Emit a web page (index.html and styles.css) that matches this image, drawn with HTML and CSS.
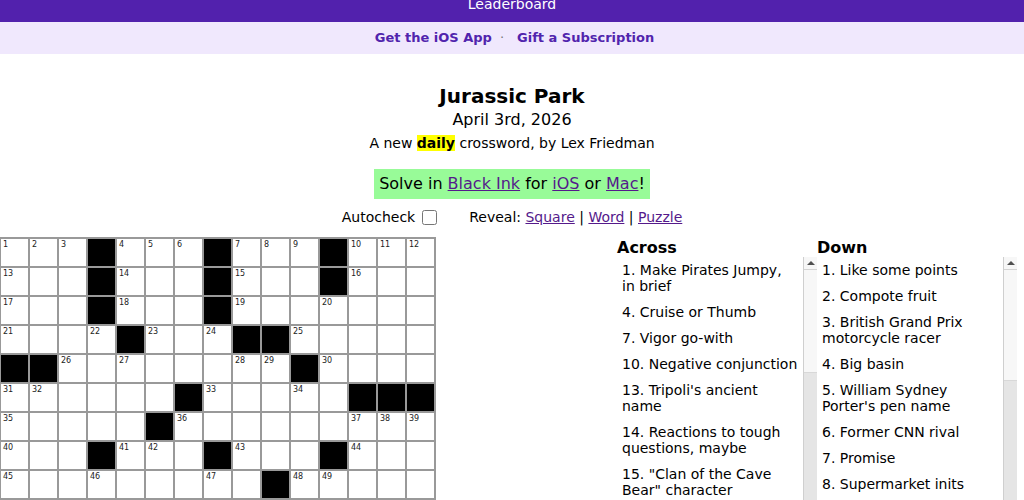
FILE: index.html
```html
<!DOCTYPE html>
<html lang="en">
<head>
<meta charset="utf-8">
<title>Jurassic Park</title>
<link rel="stylesheet" href="styles.css">
</head>
<body>
<header class="topbar"><a class="topbar-link" href="#">Leaderboard</a></header>
<nav class="subbar">
  <a class="sub-link" href="#">Get the iOS App</a><span class="sep">·</span><a class="sub-link" href="#">Gift a Subscription</a>
</nav>
<main class="page">
  <h1 class="title">Jurassic Park</h1>
  <div class="date">April 3rd, 2026</div>
  <div class="byline">A new <strong class="hl">daily</strong> crossword, by Lex Friedman</div>
  <div class="promo">Solve in <a href="#">Black Ink</a> for <a href="#">iOS</a> or <a href="#">Mac</a>!</div>
  <div class="controls">
    <label class="autocheck">Autocheck <input type="checkbox"></label>
    <span class="reveal">Reveal: <a href="#">Square</a> | <a href="#">Word</a> | <a href="#">Puzzle</a></span>
  </div>
  <section class="board">
    <div class="grid">
      <span class="sq"><span class="n">1</span></span><span class="sq"><span class="n">2</span></span><span class="sq"><span class="n">3</span></span><span class="sq blk"></span><span class="sq"><span class="n">4</span></span><span class="sq"><span class="n">5</span></span><span class="sq"><span class="n">6</span></span><span class="sq blk"></span><span class="sq"><span class="n">7</span></span><span class="sq"><span class="n">8</span></span><span class="sq"><span class="n">9</span></span><span class="sq blk"></span><span class="sq"><span class="n">10</span></span><span class="sq"><span class="n">11</span></span><span class="sq"><span class="n">12</span></span>
      <span class="sq"><span class="n">13</span></span><span class="sq"></span><span class="sq"></span><span class="sq blk"></span><span class="sq"><span class="n">14</span></span><span class="sq"></span><span class="sq"></span><span class="sq blk"></span><span class="sq"><span class="n">15</span></span><span class="sq"></span><span class="sq"></span><span class="sq blk"></span><span class="sq"><span class="n">16</span></span><span class="sq"></span><span class="sq"></span>
      <span class="sq"><span class="n">17</span></span><span class="sq"></span><span class="sq"></span><span class="sq blk"></span><span class="sq"><span class="n">18</span></span><span class="sq"></span><span class="sq"></span><span class="sq blk"></span><span class="sq"><span class="n">19</span></span><span class="sq"></span><span class="sq"></span><span class="sq"><span class="n">20</span></span><span class="sq"></span><span class="sq"></span><span class="sq"></span>
      <span class="sq"><span class="n">21</span></span><span class="sq"></span><span class="sq"></span><span class="sq"><span class="n">22</span></span><span class="sq blk"></span><span class="sq"><span class="n">23</span></span><span class="sq"></span><span class="sq"><span class="n">24</span></span><span class="sq blk"></span><span class="sq blk"></span><span class="sq"><span class="n">25</span></span><span class="sq"></span><span class="sq"></span><span class="sq"></span><span class="sq"></span>
      <span class="sq blk"></span><span class="sq blk"></span><span class="sq"><span class="n">26</span></span><span class="sq"></span><span class="sq"><span class="n">27</span></span><span class="sq"></span><span class="sq"></span><span class="sq"></span><span class="sq"><span class="n">28</span></span><span class="sq"><span class="n">29</span></span><span class="sq blk"></span><span class="sq"><span class="n">30</span></span><span class="sq"></span><span class="sq"></span><span class="sq"></span>
      <span class="sq"><span class="n">31</span></span><span class="sq"><span class="n">32</span></span><span class="sq"></span><span class="sq"></span><span class="sq"></span><span class="sq"></span><span class="sq blk"></span><span class="sq"><span class="n">33</span></span><span class="sq"></span><span class="sq"></span><span class="sq"><span class="n">34</span></span><span class="sq"></span><span class="sq blk"></span><span class="sq blk"></span><span class="sq blk"></span>
      <span class="sq"><span class="n">35</span></span><span class="sq"></span><span class="sq"></span><span class="sq"></span><span class="sq"></span><span class="sq blk"></span><span class="sq"><span class="n">36</span></span><span class="sq"></span><span class="sq"></span><span class="sq"></span><span class="sq"></span><span class="sq"></span><span class="sq"><span class="n">37</span></span><span class="sq"><span class="n">38</span></span><span class="sq"><span class="n">39</span></span>
      <span class="sq"><span class="n">40</span></span><span class="sq"></span><span class="sq"></span><span class="sq blk"></span><span class="sq"><span class="n">41</span></span><span class="sq"><span class="n">42</span></span><span class="sq"></span><span class="sq blk"></span><span class="sq"><span class="n">43</span></span><span class="sq"></span><span class="sq"></span><span class="sq blk"></span><span class="sq"><span class="n">44</span></span><span class="sq"></span><span class="sq"></span>
      <span class="sq"><span class="n">45</span></span><span class="sq"></span><span class="sq"></span><span class="sq"><span class="n">46</span></span><span class="sq"></span><span class="sq"></span><span class="sq"></span><span class="sq"><span class="n">47</span></span><span class="sq"></span><span class="sq blk"></span><span class="sq"><span class="n">48</span></span><span class="sq"><span class="n">49</span></span><span class="sq"></span><span class="sq"></span><span class="sq"></span>
      <span class="sq blk"></span><span class="sq blk"></span><span class="sq blk"></span><span class="sq"><span class="n">50</span></span><span class="sq"></span><span class="sq"></span><span class="sq"></span><span class="sq"></span><span class="sq blk"></span><span class="sq"><span class="n">51</span></span><span class="sq"></span><span class="sq"></span><span class="sq"></span><span class="sq"></span><span class="sq"></span>
      <span class="sq"><span class="n">52</span></span><span class="sq"><span class="n">53</span></span><span class="sq"><span class="n">54</span></span><span class="sq"></span><span class="sq blk"></span><span class="sq"><span class="n">55</span></span><span class="sq"></span><span class="sq"></span><span class="sq"><span class="n">56</span></span><span class="sq"></span><span class="sq"></span><span class="sq"></span><span class="sq"></span><span class="sq blk"></span><span class="sq blk"></span>
      <span class="sq"><span class="n">57</span></span><span class="sq"></span><span class="sq"></span><span class="sq"></span><span class="sq"><span class="n">58</span></span><span class="sq blk"></span><span class="sq blk"></span><span class="sq"><span class="n">59</span></span><span class="sq"></span><span class="sq"></span><span class="sq blk"></span><span class="sq"><span class="n">60</span></span><span class="sq"></span><span class="sq"><span class="n">61</span></span><span class="sq"><span class="n">62</span></span>
      <span class="sq"><span class="n">63</span></span><span class="sq"></span><span class="sq"></span><span class="sq"></span><span class="sq"></span><span class="sq"><span class="n">64</span></span><span class="sq"><span class="n">65</span></span><span class="sq blk"></span><span class="sq"><span class="n">66</span></span><span class="sq"></span><span class="sq"><span class="n">67</span></span><span class="sq blk"></span><span class="sq"><span class="n">68</span></span><span class="sq"></span><span class="sq"></span>
      <span class="sq"><span class="n">69</span></span><span class="sq"></span><span class="sq"></span><span class="sq blk"></span><span class="sq"><span class="n">70</span></span><span class="sq"></span><span class="sq"></span><span class="sq blk"></span><span class="sq"><span class="n">71</span></span><span class="sq"></span><span class="sq"></span><span class="sq blk"></span><span class="sq"><span class="n">72</span></span><span class="sq"></span><span class="sq"></span>
      <span class="sq"><span class="n">73</span></span><span class="sq"></span><span class="sq"></span><span class="sq blk"></span><span class="sq"><span class="n">74</span></span><span class="sq"></span><span class="sq"></span><span class="sq blk"></span><span class="sq"><span class="n">75</span></span><span class="sq"></span><span class="sq"></span><span class="sq blk"></span><span class="sq"><span class="n">76</span></span><span class="sq"></span><span class="sq"></span>
    </div>
    <div class="clues">
      <div class="clue-col">
        <h3 class="clue-head">Across</h3>
        <div class="clue-box">
          <ul class="clue-list">
            <li>1. Make Pirates Jumpy, in brief</li>
            <li>4. Cruise or Thumb</li>
            <li>7. Vigor go-with</li>
            <li>10. Negative conjunction</li>
            <li>13. Tripoli's ancient name</li>
            <li>14. Reactions to tough questions, maybe</li>
            <li>15. "Clan of the Cave Bear" character</li>
          </ul>
          <div class="scrollbar" aria-hidden="true"><span class="sb-btn"></span><span class="sb-thumb across-thumb"></span><span class="sb-track"></span></div>
        </div>
      </div>
      <div class="clue-col">
        <h3 class="clue-head">Down</h3>
        <div class="clue-box">
          <ul class="clue-list">
            <li>1. Like some points</li>
            <li>2. Compote fruit</li>
            <li>3. British Grand Prix motorcycle racer</li>
            <li>4. Big basin</li>
            <li>5. William Sydney Porter's pen name</li>
            <li>6. Former CNN rival</li>
            <li>7. Promise</li>
            <li>8. Supermarket inits</li>
          </ul>
          <div class="scrollbar" aria-hidden="true"><span class="sb-btn"></span><span class="sb-thumb down-thumb"></span><span class="sb-track"></span></div>
        </div>
      </div>
    </div>
  </section>
</main>
</body>
</html>
```
FILE: styles.css
```css
* { box-sizing: border-box; }
html, body { margin: 0; padding: 0; }
body {
  font-family: "DejaVu Sans", Verdana, sans-serif;
  color: #000;
  background: #fff;
}
a { color: #551a8b; }

.topbar {
  height: 22px;
  background: #5221ad;
  display: flex;
  flex-direction: column;
  justify-content: flex-end;
  align-items: center;
  padding-bottom: 10px;
  overflow: hidden;
}
.topbar-link {
  color: #fff;
  text-decoration: none;
  font-size: 14px;
  line-height: 16px;
}

.subbar {
  height: 32px;
  background: #f0e8fd;
  display: flex;
  justify-content: center;
  align-items: center;
  font-size: 13px;
  padding: 0 0 1px 5px;
}
.sub-link {
  color: #5124ad;
  font-weight: bold;
  text-decoration: none;
}
.sep {
  color: #777;
  margin: 0 13px 0 8px;
}

.page { display: flex; flex-direction: column; align-items: center; }
.title {
  margin: 30px 0 0;
  font-size: 20px;
  line-height: 24px;
  font-weight: bold;
}
.date {
  margin-top: 2px;
  font-size: 16px;
  line-height: 20px;
}
.byline {
  margin-top: 4px;
  font-size: 14px;
  line-height: 18px;
}
.hl { background: #ffff00; }
.promo {
  margin-top: 17px;
  background: #98fb98;
  padding: 5px 5px;
  font-size: 16px;
  line-height: 20px;
}
.controls {
  margin-top: 9px;
  font-size: 14px;
  line-height: 18px;
  display: flex;
  align-items: center;
  gap: 32px;
}
.autocheck { display: flex; align-items: center; gap: 7px; }
.autocheck input { margin: 0; width: 15px; height: 15px; }

.board {
  align-self: stretch;
  margin-top: 11px;
  display: flex;
  justify-content: space-between;
  align-items: flex-start;
  padding-right: 7px;
}
.grid {
  margin-left: -1px;
  display: grid;
  grid-template-columns: repeat(15, 27px);
  grid-auto-rows: 27px;
  gap: 2px;
  padding: 2px;
  background: #999;
}
.sq {
  background: #fff;
  padding: 1px 2px;
  font-size: 8px;
  line-height: 9px;
  color: #222;
}
.sq.blk { background: #000; }

.clues { display: flex; padding-top: 1px; }
.clue-col { width: 200px; }
.clue-head {
  margin: 0;
  font-size: 16px;
  line-height: 19px;
  font-weight: bold;
}
.clue-box {
  display: flex;
  height: 418px;
  overflow: hidden;
}
.clue-list {
  flex: 1;
  list-style: none;
  margin: 0;
  padding: 0;
  overflow: hidden;
  font-size: 14px;
  line-height: 16px;
}
.clue-list li { padding: 5px 5px; }

.scrollbar {
  width: 14px;
  flex: none;
  display: flex;
  flex-direction: column;
  border-left: 1px solid #cfcfcf;
  background: #f7f7f7;
}
.sb-btn {
  height: 13px;
  flex: none;
  border-bottom: 1px solid #d4d4d4;
  display: flex;
  justify-content: center;
  align-items: center;
}
.sb-btn::before {
  content: "";
  border-left: 4px solid transparent;
  border-right: 4px solid transparent;
  border-bottom: 4px solid #505050;
}
.sb-thumb { flex: none; background: #f7f7f7; }
.across-thumb { height: 102px; }
.down-thumb { height: 110px; }
.sb-track { flex: 1; background: #e5e5e5; border-top: 1px solid #d8d8d8; }
```
